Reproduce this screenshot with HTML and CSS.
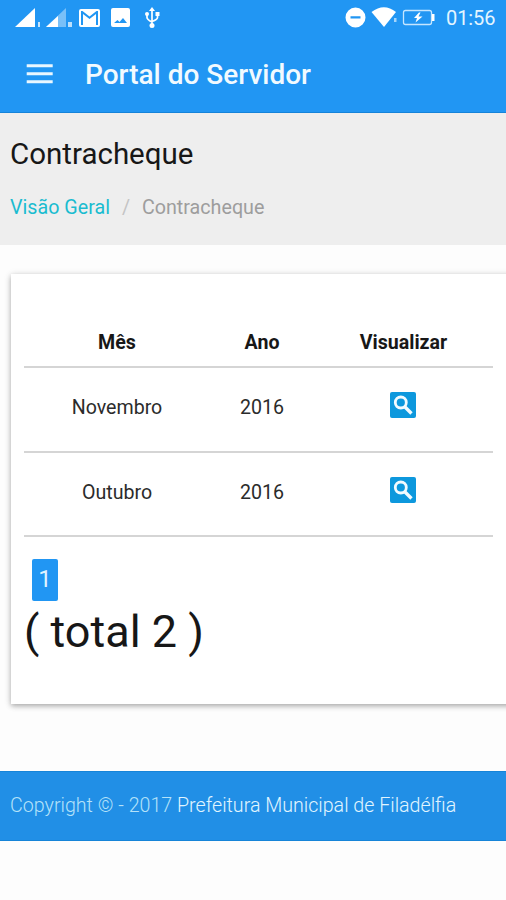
FILE: index.html
```html
<!DOCTYPE html>
<html lang="pt-BR">
<head>
<meta charset="utf-8">
<title>Portal do Servidor</title>
<link rel="stylesheet" href="styles.css">
</head>
<body>
<header class="top">
  <div class="status">
    <svg class="status-left" width="150" height="26" viewBox="15 5 150 26" fill="#fff">
      <path d="M15 27 35 8v19z"/><path d="M38 22h2v5h-2z" opacity=".75"/>
      <path d="M46 27 66 8v19z" opacity=".4"/><path d="M46 27 58 16v11z"/><path d="M68 22h4v5h-4z" opacity=".7"/>
      <path fill-rule="evenodd" d="M81 9h17q2 0 2 2v14q0 2-2 2H81q-2 0-2-2V11q0-2 2-2zm0 2v14h2V14l6.500 5 6.500-5v11h2V11h-1.500l-7 5.500-7-5.500z"/>
      <path fill-rule="evenodd" d="M113 8h15q2 0 2 2v15q0 2-2 2h-15q-2 0-2-2V10q0-2 2-2zm1 15h13l-4-5-3.500 4-2-2z"/>
      <path d="M152 10v15M147 14v3.500q0 2 5 4.500M157.500 14v3.500q0 2-5.500 4" fill="none" stroke="#fff" stroke-width="1.700"/>
      <path d="m152 7 3 4h-6z"/><circle cx="147" cy="14" r="2"/><path d="M155.500 12h4v4h-4z"/><circle cx="152" cy="25.500" r="2.500"/>
    </svg>
    <svg class="status-right" width="94" height="26" viewBox="344 5 94 26" fill="#fff">
      <path fill-rule="evenodd" d="M355.500 7.500a10 10 0 1 1 0 20 10 10 0 0 1 0-20zm-5 8.800v2.200h10v-2.200z"/>
      <path d="M371.500 12Q384 2.500 396 12L384 27z"/><path d="M394 18h2.500v4H394z" opacity=".6"/>
      <rect x="403.500" y="10.500" width="28" height="14" rx="2" fill="none" stroke="#c5e6ff" stroke-width="1.300"/>
      <path d="M432 14h2.500v7H432z"/><path d="m419 12.500-5 5.500h3l-1.500 4.500 7-6h-4l2-4z"/>
    </svg>
    <span class="clock">01:56</span>
  </div>
  <div class="appbar">
    <svg class="menu" width="28" height="20" viewBox="0 0 28 20"><path d="M.7 1.700h26M.7 9.700h26M.7 17.700h26" stroke="#e9f7ff" stroke-width="3"/></svg>
    <span class="brand">Portal do Servidor</span>
  </div>
</header>
<section class="heading">
  <h1 class="title">Contracheque</h1>
  <nav class="crumbs"><a class="crumb-link">Visão Geral</a><span class="slash">/</span><span class="crumb">Contracheque</span></nav>
</section>
<main class="card">
  <table class="table">
    <colgroup><col class="c-mes"><col class="c-ano"><col class="c-ver"></colgroup>
    <thead><tr><th>Mês</th><th>Ano</th><th>Visualizar</th></tr></thead>
    <tbody>
      <tr><td>Novembro</td><td>2016</td><td><svg class="view" width="26" height="26" viewBox="0 0 26 26"><rect width="26" height="26" rx="2" fill="#0d98dd"/><circle cx="10.800" cy="10.500" r="5.500" fill="none" stroke="#f2fbff" stroke-width="2.800"/><path d="m14.500 14.500 7 7" stroke="#f2fbff" stroke-width="3.300"/></svg></td></tr>
      <tr><td>Outubro</td><td>2016</td><td><svg class="view" width="26" height="26" viewBox="0 0 26 26"><rect width="26" height="26" rx="2" fill="#0d98dd"/><circle cx="10.800" cy="10.500" r="5.500" fill="none" stroke="#f2fbff" stroke-width="2.800"/><path d="m14.500 14.500 7 7" stroke="#f2fbff" stroke-width="3.300"/></svg></td></tr>
    </tbody>
  </table>
  <div class="pages"><span class="page">1</span></div>
  <div class="total">( total 2 )</div>
</main>
<footer class="footer"><span class="copy">Copyright © - 2017</span> Prefeitura Municipal de Filadélfia</footer>
</body>
</html>
```
FILE: styles.css
```css
* { box-sizing: border-box; }
body {
  margin: 0;
  height: 900px;
  overflow: hidden;
  background: #fdfdfd;
  color: #171717;
  font-family: Roboto, "Liberation Sans", sans-serif;
}
svg { display: block; flex: none; }
.top { height: 113px; background: #2196f3; border-bottom: 1px solid #1583d9; }
.status { display: flex; height: 36px; padding: 5px 10px 0 15px; }
.status-right { margin-left: auto; }
.clock { width: 50px; margin-left: 8px; color: #e3f5ff; font-size: 20px; line-height: 27px; letter-spacing: -.1px; white-space: nowrap; }
.appbar { display: flex; align-items: center; height: 76px; padding: 1px 0 0 26px; }
.menu { margin-top: -2px; }
.brand { margin-left: 31px; color: #f1faff; font-size: 28px; font-weight: 500; }
.heading { height: 132px; padding: 21px 10px 0; background: #eee; }
.title { margin: 0; font-size: 29.500px; font-weight: 400; line-height: 40px; }
.crumbs { display: flex; margin-top: 20px; font-size: 19.700px; line-height: 27px; color: #9d9d9d; }
.crumb-link { color: #1abcd0; }
.slash { width: 32px; text-align: center; color: #c4c4c4; }
.card {
  height: 430px;
  margin: 29px -10px 0 11px;
  padding: 43px 0 0 13px;
  background: #fff;
  box-shadow: 0 2px 5px rgba(0,0,0,.28), 0 1px 8px rgba(0,0,0,.1);
}
.table { width: 469px; table-layout: fixed; border-collapse: collapse; font-size: 19.600px; }
.c-mes { width: 186px; }
.c-ano { width: 104px; }
.c-ver { width: 179px; }
.table th, .table td { padding: 0; text-align: center; border-bottom: 2px solid #d5d5d5; }
.table th { height: 50px; padding-top: 2px; font-weight: 700; }
.table td { height: 84.500px; padding-bottom: 3px; color: #2b2b2b; }
.view { position: relative; left: -1px; margin: -5px auto 0; }
.pages { display: flex; margin: 22px 0 0 8px; }
.page { width: 26px; height: 42px; border-radius: 2px; background: #2196f3; color: #dff2ff; font-size: 24px; line-height: 40px; text-align: center; }
.total { margin-top: 4px; font-size: 45px; line-height: 54px; white-space: nowrap; }
.footer { height: 70px; margin-top: 67px; padding-left: 10px; background: #218fe6; border-block: 1px solid #1684d8; color: #e0f5ff; font-size: 19.650px; font-weight: 300; line-height: 67px; white-space: nowrap; }
.copy { color: #b4e2f9; }
```
